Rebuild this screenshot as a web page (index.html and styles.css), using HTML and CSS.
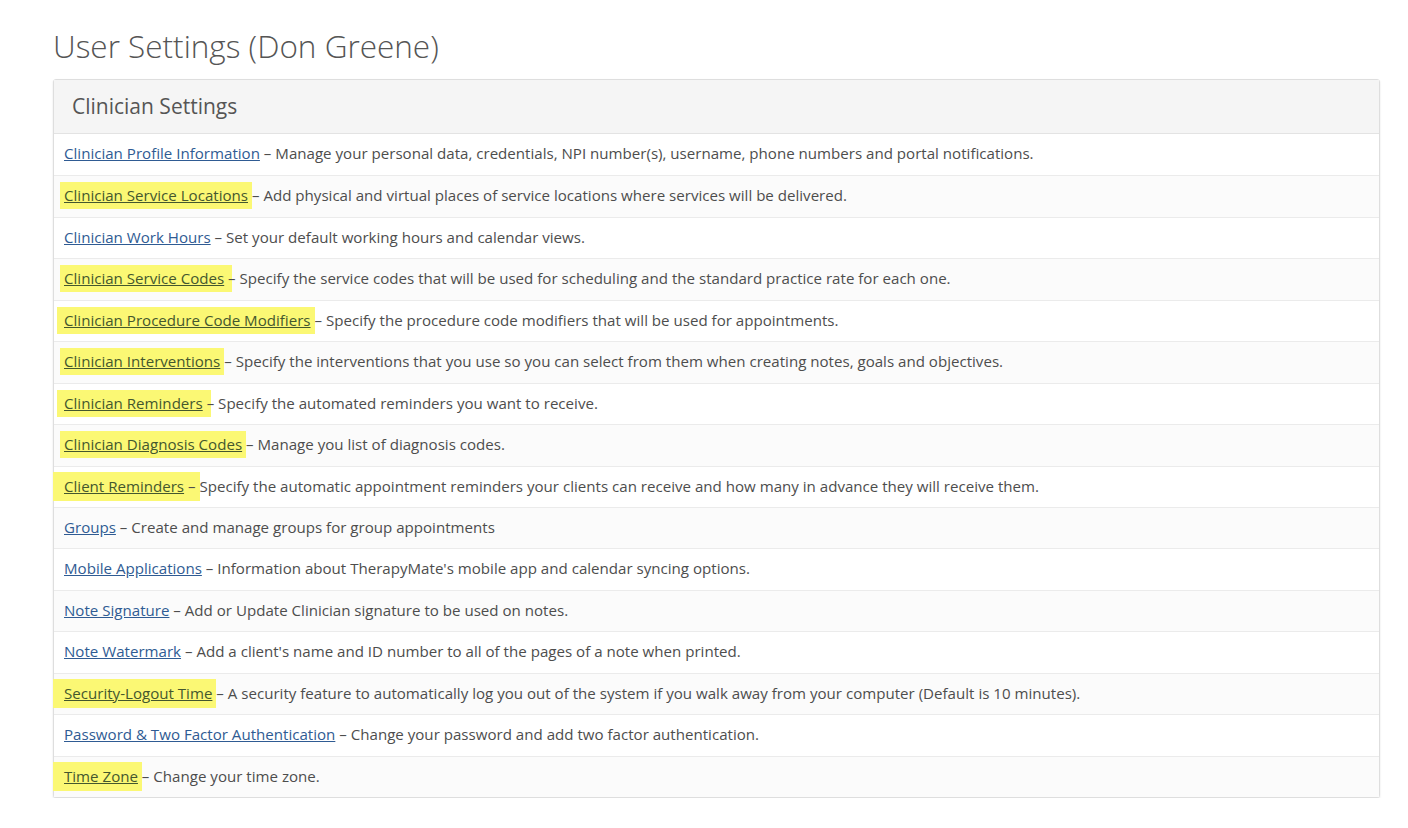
FILE: index.html
```html
<!DOCTYPE html>
<html lang="en">

<head>
  <meta charset="UTF-8">
  <meta name="viewport" content="width=device-width, initial-scale=1.0">
  <title>User Settings</title>
  <link rel="stylesheet" href="styles.css">
</head>

<body>
  <div class="page">
    <h1 class="pageTitle">User Settings (Don Greene)</h1>
    <div class="panel">
      <div class="panelHeading">Clinician Settings</div>
      <ul class="settingsList">
        <li><a href="#">Clinician Profile Information</a> – Manage your personal data, credentials, NPI number(s), username, phone numbers and portal notifications.</li>
        <li><span class="mark"><a href="#">Clinician Service Locations</a></span> – Add physical and virtual places of service locations where services will be delivered.</li>
        <li><a href="#">Clinician Work Hours</a> – Set your default working hours and calendar views.</li>
        <li><span class="mark mark_long"><a href="#">Clinician Service Codes</a></span> – Specify the service codes that will be used for scheduling and the standard practice rate for each one.</li>
        <li><span class="mark mark_left"><a href="#">Clinician Procedure Code Modifiers</a></span> – Specify the procedure code modifiers that will be used for appointments.</li>
        <li><span class="mark"><a href="#">Clinician Interventions</a></span> – Specify the interventions that you use so you can select from them when creating notes, goals and objectives.</li>
        <li><span class="mark mark_left mark_long"><a href="#">Clinician Reminders</a></span> – Specify the automated reminders you want to receive.</li>
        <li><span class="mark"><a href="#">Clinician Diagnosis Codes</a></span> – Manage you list of diagnosis codes.</li>
        <li><span class="mark mark_wide"><a href="#">Client Reminders</a> –</span> Specify the automatic appointment reminders your clients can receive and how many in advance they will receive them.</li>
        <li><a href="#">Groups</a> – Create and manage groups for group appointments</li>
        <li><a href="#">Mobile Applications</a> – Information about TherapyMate's mobile app and calendar syncing options.</li>
        <li><a href="#">Note Signature</a> – Add or Update Clinician signature to be used on notes.</li>
        <li><a href="#">Note Watermark</a> – Add a client's name and ID number to all of the pages of a note when printed.</li>
        <li><span class="mark mark_wide"><a href="#">Security-Logout Time</a></span> – A security feature to automatically log you out of the system if you walk away from your computer (Default is 10 minutes).</li>
        <li><a href="#">Password &amp; Two Factor Authentication</a> – Change your password and add two factor authentication.</li>
        <li><span class="mark mark_wide"><a href="#">Time Zone</a></span> – Change your time zone.</li>
      </ul>
    </div>
  </div>
</body>

</html>
```

FILE: styles.css
```css
* {
  margin: 0;
  padding: 0;
}

body {
  background-color: #ffffff;
  font-family: "Open Sans", "Liberation Sans", sans-serif;
  color: #555;
}

a {
  color: #2f5b93;
  text-decoration: underline;
}

.page {
  width: 1327px;
  padding: 26px 0 0 53px;
}

.pageTitle {
  font-size: 31.5px;
  font-weight: 300;
  line-height: 40px;
  color: #555;
  margin-bottom: 13px;
}

.panel {
  border: 1px solid #dedede;
  border-radius: 3px;
  box-shadow: 0 1px 2px rgba(0, 0, 0, 0.12);
  background-color: #ffffff;
}

.panelHeading {
  height: 53px;
  line-height: 53px;
  padding-left: 18px;
  font-size: 21px;
  color: #555;
  background-color: #f5f5f5;
  border-bottom: 1px solid #e3e3e3;
}

.settingsList {
  list-style: none;
}

.settingsList li {
  box-sizing: border-box;
  height: 41.45px;
  line-height: 39px;
  padding-left: 10px;
  font-size: 15.1px;
  color: #4d4d4d;
  border-top: 1px solid #ebebeb;
}

.settingsList li:first-child {
  border-top: none;
}

.settingsList li:nth-child(even) {
  background-color: #fbfbfb;
}

.mark {
  display: inline-block;
  line-height: 20px;
  padding: 3px 4px 4px;
  margin: 0 -4px;
  background-color: #fbf874;
}

.mark a {
  color: #44572e;
}

.mark_left {
  padding-left: 7px;
  margin-left: -7px;
}

.mark_long {
  padding-right: 8px;
  margin-right: -8px;
}

.mark_wide {
  padding-left: 11px;
  margin-left: -11px;
  padding-top: 4px;
  padding-bottom: 5px;
}
```
